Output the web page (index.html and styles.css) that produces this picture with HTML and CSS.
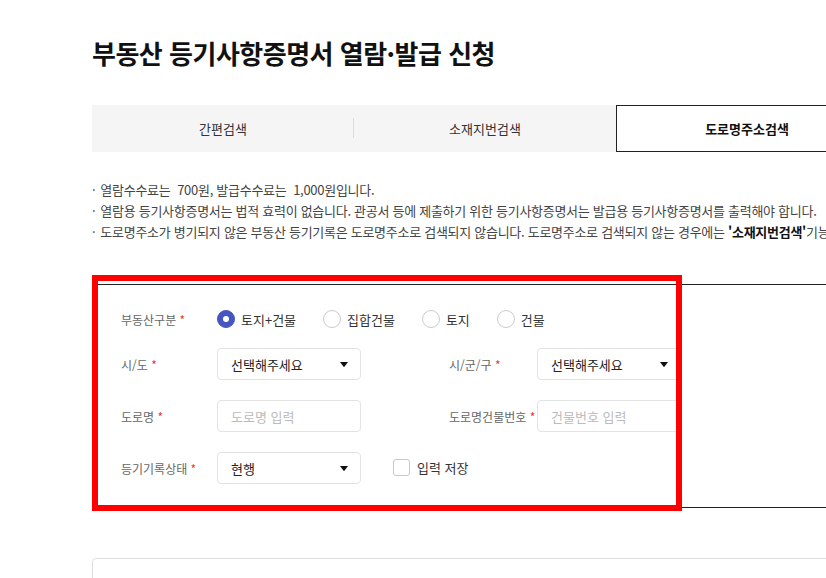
FILE: index.html
```html
<!DOCTYPE html>
<html lang="ko">
<head>
<meta charset="utf-8">
<title>부동산 등기사항증명서 열람·발급 신청</title>
<link rel="stylesheet" href="styles.css">
</head>
<body>
<div class="page">
  <h1 class="title">부동산 등기사항증명서 열람·발급 신청</h1>

  <div class="tabs">
    <div class="tab">간편검색</div>
    <div class="tab">소재지번검색</div>
    <div class="tab active">도로명주소검색</div>
  </div>

  <ul class="notes">
    <li>열람수수료는&nbsp; 700원, 발급수수료는&nbsp; 1,000원입니다.</li>
    <li>열람용 등기사항증명서는 법적 효력이 없습니다. 관공서 등에 제출하기 위한 등기사항증명서는 발급용 등기사항증명서를 출력해야 합니다.</li>
    <li>도로명주소가 병기되지 않은 부동산 등기기록은 도로명주소로 검색되지 않습니다. 도로명주소로 검색되지 않는 경우에는 <b>'소재지번검색'</b>기능을 이용하시기 바랍니다.</li>
  </ul>

  <div class="form">
    <div class="row row-radio">
      <span class="label">부동산구분 <em>*</em></span>
      <div class="radios">
        <span class="radio-item"><span class="radio checked"></span>토지+건물</span>
        <span class="radio-item"><span class="radio"></span>집합건물</span>
        <span class="radio-item"><span class="radio"></span>토지</span>
        <span class="radio-item"><span class="radio"></span>건물</span>
      </div>
    </div>

    <div class="row">
      <span class="label">시/도 <em>*</em></span>
      <div class="select">선택해주세요<svg class="caret" viewBox="0 0 8 5" width="8" height="5"><path d="M0 0H8L4.6 4.6Q4 5.2 3.4 4.6Z" fill="#111"/></svg></div>
      <span class="label label-2">시/군/구 <em>*</em></span>
      <div class="select">선택해주세요<svg class="caret" viewBox="0 0 8 5" width="8" height="5"><path d="M0 0H8L4.6 4.6Q4 5.2 3.4 4.6Z" fill="#111"/></svg></div>
    </div>

    <div class="row">
      <span class="label">도로명 <em>*</em></span>
      <div class="input placeholder">도로명 입력</div>
      <span class="label label-2">도로명건물번호 <em>*</em></span>
      <div class="input placeholder">건물번호 입력</div>
    </div>

    <div class="row">
      <span class="label">등기기록상태 <em>*</em></span>
      <div class="select">현행<svg class="caret" viewBox="0 0 8 5" width="8" height="5"><path d="M0 0H8L4.6 4.6Q4 5.2 3.4 4.6Z" fill="#111"/></svg></div>
      <span class="check-item"><span class="checkbox"></span>입력 저장</span>
    </div>
  </div>

  <div class="result"></div>

  <div class="highlight"></div>
</div>
</body>
</html>
```

FILE: styles.css
```css
html, body {
  margin: 0;
  padding: 0;
  overflow: hidden;
  background: #fff;
}

body {
  font-family: "Noto Sans CJK KR", "Noto Sans", sans-serif;
  color: #222;
}

.page {
  position: relative;
  width: 1100px;
  padding: 35px 0 0 92px;
}

.title {
  margin: 0;
  font-size: 26px;
  line-height: 36px;
  font-weight: 700;
  letter-spacing: -0.5px;
  color: #111;
}

.tabs {
  display: flex;
  margin-top: 34px;
  height: 47px;
}

.tab {
  position: relative;
  width: 262px;
  flex: none;
  display: flex;
  align-items: center;
  justify-content: center;
  background: #f5f5f5;
  font-size: 13px;
  color: #333;
}

.tab + .tab::before {
  content: "";
  position: absolute;
  left: -1px;
  top: 13px;
  width: 1px;
  height: 20px;
  background: #dcdcdc;
}

.tab.active {
  background: #fff;
  border: 1px solid #222;
  box-sizing: border-box;
  font-weight: 700;
  color: #111;
}

.tab.active::before {
  display: none;
}

.notes {
  list-style: none;
  margin: 27px 0 0;
  padding: 0;
  font-size: 13px;
  line-height: 21px;
  color: #444;
  white-space: nowrap;
  letter-spacing: -0.28px;
}

.notes li::before {
  content: "·";
  margin-right: 5px;
}

.notes b {
  color: #111;
}

.form {
  margin-top: 42px;
  border-top: 1px solid #222;
  border-bottom: 1px solid #222;
  padding: 18px 0 23px 29px;
  display: flex;
  flex-direction: column;
  gap: 20px;
}

.row {
  display: flex;
  align-items: center;
  height: 32px;
}

.row-radio {
  margin-bottom: -7px;
}

.label {
  flex: none;
  width: 96px;
  font-size: 12px;
  color: #666;
}

.label em {
  font-style: normal;
  color: #e53935;
}

.label-2 {
  width: 88px;
  margin-left: 88px;
}

.radios {
  display: flex;
  align-items: center;
  gap: 27px;
}

.radio-item {
  display: flex;
  align-items: center;
  gap: 6px;
  font-size: 13px;
  color: #333;
}

.radio {
  width: 16px;
  height: 16px;
  border: 1px solid #ccc;
  border-radius: 50%;
  background: #fff;
}

.radio.checked {
  border-color: #4656c0;
  background: #4656c0;
  position: relative;
}

.radio.checked::after {
  content: "";
  position: absolute;
  left: 5px;
  top: 5px;
  width: 6px;
  height: 6px;
  border-radius: 50%;
  background: #fff;
}

.select,
.input {
  flex: none;
  box-sizing: border-box;
  width: 144px;
  height: 32px;
  border: 1px solid #e3e3e3;
  border-radius: 4px;
  padding: 0 12px 0 13px;
  display: flex;
  align-items: center;
  justify-content: space-between;
  font-size: 13px;
  color: #222;
}

.placeholder {
  color: #bbb;
}

.caret {
  display: block;
}

.check-item {
  display: flex;
  align-items: center;
  gap: 7px;
  margin-left: 32px;
  font-size: 13px;
  color: #333;
  margin-top: -2px;
}

.checkbox {
  width: 15px;
  height: 15px;
  border: 1px solid #c8c8c8;
  border-radius: 3px;
  background: #fff;
}

.result {
  margin-top: 50px;
  height: 80px;
  border: 1px solid #ddd;
  border-radius: 4px;
}

.highlight {
  position: absolute;
  left: 92px;
  top: 275px;
  width: 590px;
  height: 236px;
  box-sizing: border-box;
  border: 6px solid #ff0000;
  pointer-events: none;
}
```
